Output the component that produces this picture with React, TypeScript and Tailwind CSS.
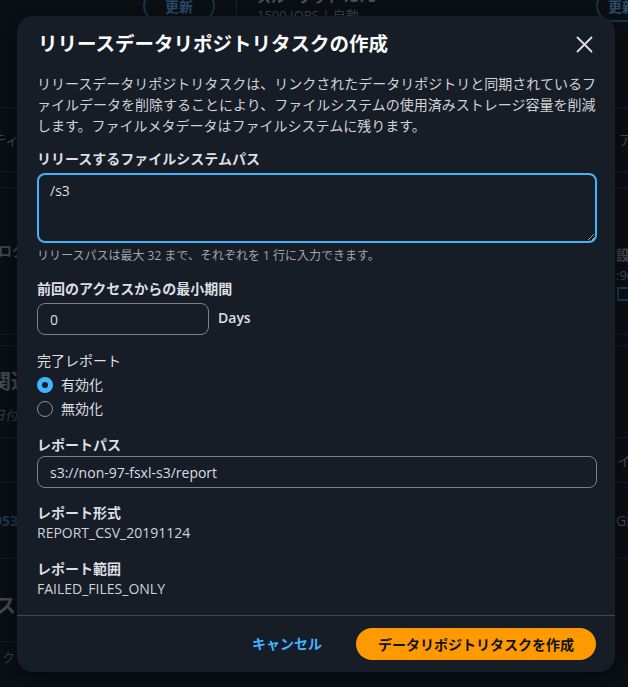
const FONT = "font-['Open_Sans','Noto_Sans_CJK_JP',sans-serif]"

function PageBehind() {
  return (
    <div className="flex h-full flex-col text-[#5d636d]">
      {/* top strip, mostly hidden by the modal */}
      <div className="flex h-[22px] shrink-0 items-start pl-[143px]">
        <div className="-mt-[10px] flex h-[32px] w-[72px] items-center justify-center rounded-full border-2 border-[#1f4666] text-[14px] font-bold text-[#3a6a95]">
          更新
        </div>
        <div className="ml-[21px] h-[22px] w-px bg-[#262c35]" />
        <div className="ml-[20px] -mt-[12px] flex flex-col leading-[18px]">
          <span className="text-[14px] font-bold text-[#6b717a]">スループット IOPS</span>
          <span className="text-[13px] text-[#555b64]">1500 IOPS | 自動</span>
        </div>
        <div className="ml-auto -mr-[40px] -mt-[10px] flex h-[32px] w-[72px] items-center justify-start rounded-full border-2 border-[#1f4666] pl-[10px] text-[14px] font-bold text-[#3a6a95]">
          更新
        </div>
      </div>

      <div className="flex flex-1">
        <div className="flex w-[17px] shrink-0 flex-col overflow-hidden">
          <div className="h-[86px] shrink-0 border-b border-[#1d232b]" />
          <div className="flex h-[64px] shrink-0 items-center border-b border-[#1d232b] whitespace-nowrap">
            <span className="-ml-[8px] text-[14px]">ティ</span>
          </div>
          <div className="h-[16px] shrink-0 border-b border-[#1d232b]" />
          <div className="flex h-[147px] shrink-0 items-start border-b border-[#1d232b] pt-[52px] whitespace-nowrap">
            <span className="-ml-[2px] text-[14px] font-bold">ログ</span>
          </div>
          <div className="h-[11px] shrink-0 border-b border-[#1d232b]" />
          <div className="flex h-[92px] shrink-0 flex-col border-b border-[#1d232b] pt-[22px] whitespace-nowrap">
            <span className="-ml-[9px] text-[20px] font-bold leading-[28px] text-[#62676f]">関連</span>
            <span className="-ml-[8px] mt-[10px] text-[13px] italic text-[#4f555e]">日付</span>
          </div>
          <div className="h-[45px] shrink-0 border-b border-[#1d232b]" />
          <div className="flex h-[76px] shrink-0 items-center border-b border-[#1d232b] whitespace-nowrap">
            <span className="-ml-[6px] text-[14px] font-bold text-[#1f4f75]">953</span>
          </div>
          <div className="flex h-[83px] shrink-0 items-end border-b border-[#1d232b] pb-[20px] whitespace-nowrap">
            <span className="-ml-[4px] text-[20px] font-bold text-[#62676f]">スク</span>
          </div>
          <div className="flex flex-1 items-start pt-[6px] whitespace-nowrap">
            <span className="ml-[2px] text-[13px] text-[#4f555e]">ク</span>
          </div>
        </div>

        <div className="flex-1" />

        <div className="flex w-[13px] shrink-0 flex-col overflow-hidden">
          <div className="h-[86px] shrink-0 border-b border-[#1d232b]" />
          <div className="flex h-[64px] shrink-0 items-center border-b border-[#1d232b] whitespace-nowrap">
            <span className="ml-[4px] text-[14px]">アク</span>
          </div>
          <div className="h-[16px] shrink-0 border-b border-[#1d232b]" />
          <div className="flex h-[147px] shrink-0 flex-col border-b border-[#1d232b] pt-[57px] whitespace-nowrap leading-[20px]">
            <span className="ml-[1px] text-[14px] font-bold">設定</span>
            <span className="ml-[1px] text-[13px]">:90</span>
            <span className="ml-[2px] mt-[2px] h-[14px] w-[14px] border-2 border-[#1f4f75]" />
          </div>
          <div className="h-[11px] shrink-0 border-b border-[#1d232b]" />
          <div className="h-[92px] shrink-0 border-b border-[#1d232b]" />
          <div className="flex h-[45px] shrink-0 items-center border-b border-[#1d232b] whitespace-nowrap">
            <span className="ml-[2px] text-[14px]">イ</span>
          </div>
          <div className="flex h-[76px] shrink-0 items-center border-b border-[#1d232b] whitespace-nowrap">
            <span className="ml-[1px] text-[14px]">GB</span>
          </div>
          <div className="flex-1" />
        </div>
      </div>
    </div>
  )
}

function Radio({ checked, label }: { checked?: boolean; label: string }) {
  return (
    <label className="flex h-[24px] items-center gap-[8px]">
      {checked ? (
        <span className="h-[16px] w-[16px] rounded-full border-[5px] border-[#42b4ff] bg-[#161d26]" />
      ) : (
        <span className="h-[16px] w-[16px] rounded-full border-[1.5px] border-[#8c8c94]" />
      )}
      <span className="text-[14px] leading-[20px] text-[#dedee3]">{label}</span>
    </label>
  )
}

function Modal() {
  return (
    <div className="flex w-[598px] flex-col rounded-[16px] bg-[#161d26] shadow-[0_4px_24px_rgba(0,0,0,0.5)]">
      <div className="pl-[21px] pr-[18px] pt-[14px]">
        <div className="flex h-[28px] items-center justify-between">
          <h2 className="text-[19.5px] font-bold leading-[28px] text-[#fbfbfc]">
            リリースデータリポジトリタスクの作成
          </h2>
          <button className="mr-[4px] flex h-[17px] w-[17px] items-center justify-center text-[#dedee3]">
            <svg viewBox="0 0 17 17" className="h-[17px] w-[17px]" fill="none" stroke="currentColor" strokeWidth={1.8} strokeLinecap="round">
              <path d="M1.5 1.5l14 14M15.5 1.5l-14 14" />
            </svg>
          </button>
        </div>
      </div>

      <div className="flex flex-col pl-[20px] pr-[18px]">
        <p className="mt-[15px] whitespace-nowrap text-[14px] leading-[21px] text-[#d1d1d6]">
          リリースデータリポジトリタスクは、リンクされたデータリポジトリと同期されているフ
          <br />
          ァイルデータを削除することにより、ファイルシステムの使用済みストレージ容量を削減
          <br />
          します。ファイルメタデータはファイルシステムに残ります。
        </p>

        <label className="mt-[13px] text-[14px] font-bold leading-[20px] text-[#dedee3]">
          リリースするファイルシステムパス
        </label>
        <textarea
          defaultValue="/s3"
          className="mt-[4px] block h-[70px] w-full resize-y rounded-[8px] border-2 border-[#42b4ff] bg-transparent px-[11px] py-[6px] text-[14px] leading-[20px] text-[#dedee3] outline-none [color-scheme:dark]"
        />
        <p className="mt-[5px] text-[12px] leading-[16px] text-[#a4a4ad]">
          リリースパスは最大 32 まで、それぞれを 1 行に入力できます。
        </p>

        <label className="mt-[15px] text-[14px] font-bold leading-[20px] text-[#dedee3]">
          前回のアクセスからの最小期間
        </label>
        <div className="mt-[4px] flex items-center gap-[9px]">
          <input
            defaultValue="0"
            className="h-[32px] w-[172px] rounded-[8px] border border-[#7d8189] bg-transparent px-[12px] text-[14px] text-[#dedee3] outline-none"
          />
          <span className="-mt-[4px] text-[14px] font-semibold text-[#dedee3]">Days</span>
        </div>

        <span className="mt-[16px] text-[14px] leading-[20px] text-[#dedee3]">完了レポート</span>
        <div className="mt-[2px] flex flex-col">
          <Radio checked label="有効化" />
          <Radio label="無効化" />
        </div>

        <label className="mt-[14px] text-[14px] font-bold leading-[20px] text-[#dedee3]">
          レポートパス
        </label>
        <input
          defaultValue="s3://non-97-fsxl-s3/report"
          className="mt-[1px] h-[32px] w-full rounded-[8px] border border-[#7d8189] bg-transparent px-[12px] text-[14px] text-[#dedee3] outline-none"
        />

        <span className="mt-[15px] text-[14px] font-bold leading-[20px] text-[#dedee3]">レポート形式</span>
        <span className="text-[14px] leading-[20px] text-[#d1d1d6]">REPORT_CSV_20191124</span>

        <span className="mt-[16px] text-[14px] font-bold leading-[20px] text-[#dedee3]">レポート範囲</span>
        <span className="text-[14px] leading-[20px] text-[#d1d1d6]">FAILED_FILES_ONLY</span>
      </div>

      <div className="mt-[16px] flex items-center justify-end gap-[14px] border-t border-[#414750] pb-[12px] pl-[20px] pr-[19px] pt-[12px]">
        <button className="px-[20px] text-[14px] font-bold leading-[20px] text-[#42b4ff]">キャンセル</button>
        <button className="h-[32px] rounded-full bg-[#ff9900] px-[22px] text-[14px] font-bold text-[#0f141a]">
          データリポジトリタスクを作成
        </button>
      </div>
    </div>
  )
}

export default function App() {
  return (
    <div className={`relative h-[687px] w-[628px] overflow-hidden bg-[#0c1016] ${FONT}`}>
      <PageBehind />
      <div className="absolute inset-0 bg-[#0b0f14]/30 pl-[17px] pt-[16px]">
        <Modal />
      </div>
    </div>
  )
}
